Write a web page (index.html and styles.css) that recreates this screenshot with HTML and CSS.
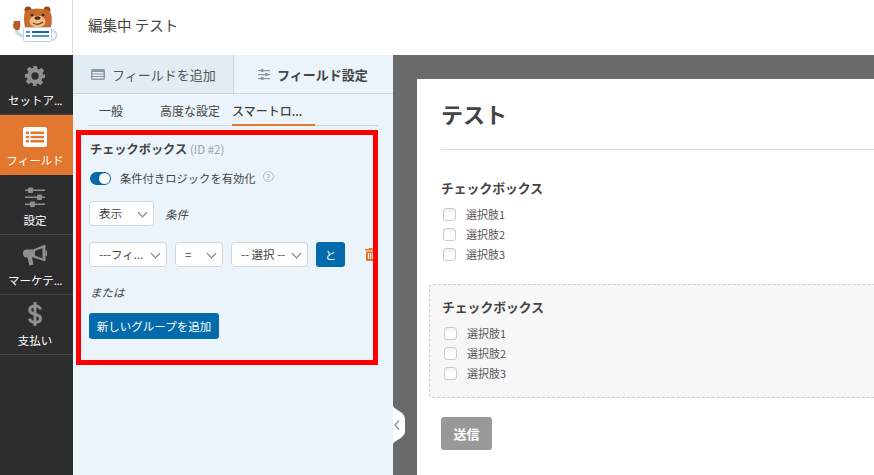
FILE: index.html
```html
<!DOCTYPE html>
<html lang="ja">
<head>
  <meta charset="UTF-8">
  <title>編集中 テスト</title>
  <link rel="stylesheet" href="styles.css">
</head>
<body>
  <header class="topbar">
    <div class="logo">
      <svg width="46" height="37" viewBox="0 0 46 37">
        <circle cx="16" cy="4" r="3.500" fill="#8f4c22"/>
        <circle cx="35" cy="4" r="3.500" fill="#8f4c22"/>
        <path d="M13 5 Q25 0 38 5 Q41 12 39 21 Q26 27 13 21 Q11 12 13 5Z" fill="#c9692c"/>
        <ellipse cx="25.500" cy="15.500" rx="8" ry="6" fill="#f2bd85"/>
        <circle cx="20" cy="9" r="1.300" fill="#33211a"/>
        <circle cx="31" cy="9" r="1.300" fill="#33211a"/>
        <ellipse cx="25.500" cy="12" rx="3" ry="1.800" fill="#4a2c1d"/>
        <path d="M21 17 Q26 20 31 16" stroke="#7a3a1a" stroke-width="1.200" fill="none"/>
        <path d="M4 24 Q5 29 12 30" stroke="#cfe0ea" stroke-width="3.500" fill="none"/>
        <path d="M2 15 L1 20 Q2 25 7 24 Q9 21 8 15 Z" fill="#b35c2a"/>
        <path d="M40 24 Q46 27 44 31 Q43 34 39 34" stroke="#cfd9e0" stroke-width="2" fill="none"/>
        <rect x="11.500" y="21.500" width="28" height="14" rx="1" fill="#fff" stroke="#c5d3dc"/>
        <rect x="14" y="25" width="4" height="2" fill="#4b92cf"/>
        <rect x="20" y="25" width="17" height="2" fill="#1c68ad"/>
        <rect x="14" y="29" width="4" height="2" fill="#4b92cf"/>
        <rect x="20" y="29" width="17" height="2" fill="#4b92cf"/>
      </svg>
    </div>
    <div class="topbar-title">編集中 テスト</div>
  </header>

  <div class="main">
    <nav class="sidebar">
      <a class="side-item">
        <svg width="22" height="22" viewBox="0 0 24 24"><path fill="#8f8f8f" d="M10 1h4l.6 3.100 2 .8 2.600-1.800 2.800 2.800-1.800 2.600.8 2L23 10v4l-3.100.6-.8 2 1.800 2.600-2.800 2.800-2.600-1.800-2 .8L14 23h-4l-.6-3.100-2-.8-2.600 1.800L2 18.100l1.800-2.600-.8-2L1 14v-4l3.100-.6.8-2L3.100 4.800 5.900 2l2.600 1.800 2-.8zM12 8a4 4 0 1 0 0 8 4 4 0 0 0 0-8z"/></svg>
        <span>セットア<b class="dots">...</b></span>
      </a>
      <a class="side-item active">
        <svg width="24" height="20" viewBox="0 0 24 20"><rect width="24" height="20" rx="2.500" fill="#fff"/><g fill="#e27730"><rect x="3" y="4.500" width="3" height="2.500"/><rect x="3" y="8.800" width="3" height="2.500"/><rect x="3" y="13" width="3" height="2.500"/><rect x="7.500" y="4.500" width="13.500" height="2.500"/><rect x="7.500" y="8.800" width="13.500" height="2.500"/><rect x="7.500" y="13" width="13.500" height="2.500"/></g></svg>
        <span>フィールド</span>
      </a>
      <a class="side-item">
        <svg width="20" height="20" viewBox="0 0 20 20"><g fill="#8f8f8f"><rect y="2.500" width="20" height="1.500"/><rect y="9.500" width="20" height="1.500"/><rect y="16.500" width="20" height="1.500"/><rect x="3" y="0.500" width="5" height="5.500" rx="1"/><rect x="12" y="7.500" width="5" height="5.500" rx="1"/><rect x="5" y="14.500" width="5" height="5.500" rx="1"/></g></svg>
        <span>設定</span>
      </a>
      <a class="side-item">
        <svg width="24" height="22" viewBox="0 0 24 22"><path fill="#8f8f8f" fill-rule="evenodd" d="M21 0h1.500v16H21L10 12.500H9l1.500 7-4 1-2-8H4a4 4 0 0 1-4-4V8a3.500 3.500 0 0 1 3.500-3.500H10zM19.500 3 12 6v4.500l7.500 3z"/><path stroke="#8f8f8f" stroke-width="1.500" d="M23.300 5.500v5.500"/></svg>
        <span>マーケテ<b class="dots">...</b></span>
      </a>
      <a class="side-item">
        <svg width="14" height="26" viewBox="0 0 14 26"><path fill="none" stroke="#8f8f8f" stroke-width="3" d="M12.500 8.500C12 6 10 5 7 5 4 5 1.700 6.500 1.700 9c0 6 10.800 2.500 10.800 8.500 0 2.500-2.500 3.800-5.500 3.800s-5-1.300-5.500-3.800"/><path stroke="#8f8f8f" stroke-width="3" d="M7 1v24"/></svg>
        <span>支払い</span>
      </a>
    </nav>

    <section class="panel">
      <div class="panel-tabs">
        <div class="panel-tab tab-add">
          <svg width="14" height="11" viewBox="0 0 14 11"><rect width="14" height="11" rx="1.500" fill="#8c9aa6"/><rect x="1.500" y="3" width="11" height="1.500" fill="#e3ecf3"/><rect x="1.500" y="5.500" width="11" height="1.500" fill="#e3ecf3"/><rect x="1.500" y="8" width="11" height="1.500" fill="#e3ecf3"/></svg>
          フィールドを追加
        </div>
        <div class="panel-tab tab-options">
          <svg width="12" height="11" viewBox="0 0 12 11"><g fill="#8c9aa6"><rect y="1" width="12" height="1.200"/><rect y="5" width="12" height="1.200"/><rect y="9" width="12" height="1.200"/><rect x="3" width="2.500" height="3"/><rect x="7" y="4" width="2.500" height="3"/><rect x="3" y="8" width="2.500" height="3"/></g></svg>
          フィールド設定
        </div>
      </div>
      <div class="sub-tabs">
        <span class="sub-tab tab-general">一般</span>
        <span class="sub-tab tab-advanced">高度な設定</span>
        <span class="sub-tab tab-smart">スマートロ...</span>
      </div>

      <div class="highlight-box">
        <h3 class="group-title">チェックボックス <small>(ID #2)</small></h3>
        <div class="toggle-row">
          <span class="toggle"></span>
          <span>条件付きロジックを有効化</span>
          <span class="help">?</span>
        </div>
        <div class="show-row">
          <div class="fake-select sel-show">表示</div>
          <em>条件</em>
        </div>
        <div class="rule-row">
          <div class="fake-select sel-field">---フィ...</div>
          <div class="fake-select sel-op">=</div>
          <div class="fake-select sel-value">-- 選択 --</div>
          <button class="btn btn-and">と</button>
          <svg class="trash" width="11" height="13" viewBox="0 0 11 13"><path fill="#e27730" d="M4 0h3l.5 1H11v1.500H0V1h3.500zM1 3.500h9V13H1zm2 1.500v6h1V5zm2 0v6h1V5zm2 0v6h1V5z"/></svg>
        </div>
        <em class="or-text">または</em>
        <button class="btn btn-group">新しいグループを追加</button>
      </div>
    </section>

    <section class="preview">
      <svg class="collapse" width="12" height="40" viewBox="0 0 12 40">
        <path fill="#fff" d="M0 0C0 5 12 6 12 14V26C12 34 0 35 0 40Z"/>
        <path d="M6 15.500 2 20l4 4.500" fill="none" stroke="#8a9099" stroke-width="1.300"/>
      </svg>
      <div class="form-card">
        <h1 class="form-title">テスト</h1>
        <div class="field">
          <div class="field-label">チェックボックス</div>
          <label class="choice"><i></i>選択肢1</label>
          <label class="choice"><i></i>選択肢2</label>
          <label class="choice"><i></i>選択肢3</label>
        </div>
        <div class="field field-active">
          <div class="field-label">チェックボックス</div>
          <label class="choice"><i></i>選択肢1</label>
          <label class="choice"><i></i>選択肢2</label>
          <label class="choice"><i></i>選択肢3</label>
        </div>
        <button class="submit">送信</button>
      </div>
    </section>
  </div>
</body>
</html>
```

FILE: styles.css
```css
* {
  box-sizing: border-box;
}
html, body {
  height: 100%;
}
body {
  margin: 0;
  overflow: hidden;
  font-family: "Noto Sans CJK JP", "Noto Sans", sans-serif;
  font-size: 12px;
  color: #444;
  background: #fff;
}
.topbar {
  display: flex;
  height: 55px;
  background: #fff;
}
.logo {
  width: 73px;
  display: flex;
  align-items: center;
  justify-content: center;
  padding: 0 2px 6px 0;
  border-right: 1px solid #ddd;
}
.topbar-title {
  padding-left: 15px;
  line-height: 49px;
  font-size: 14.500px;
  color: #444;
}
.main {
  display: flex;
  height: 420px;
}
.sidebar {
  width: 73px;
  flex: none;
  background: #2d2d2d;
}
.side-item {
  height: 60px;
  display: flex;
  flex-direction: column;
  align-items: center;
  justify-content: flex-end;
  gap: 5px;
  padding: 0 3px 6px 0;
  border-bottom: 1px solid #444;
  color: #fff;
  font-size: 11.500px;
  line-height: 16px;
  white-space: nowrap;
}
.side-item.active {
  background: #e27730;
  border-bottom-color: #e27730;
}
.dots {
  font-weight: 400;
  letter-spacing: -0.500px;
}
.panel {
  width: 320px;
  flex: none;
  background: #ebf3fb;
}
.panel-tabs {
  display: flex;
  height: 39px;
}
.panel-tab {
  display: flex;
  align-items: center;
  gap: 7px;
  font-size: 13px;
  border-bottom: 1px solid #ced7e0;
}
.tab-add {
  width: 161px;
  padding-left: 18px;
  background: #e3ecf3;
  border-right: 1px solid #ced7e0;
  color: #555;
}
.tab-options {
  flex: 1;
  padding-left: 24px;
  font-weight: 700;
}
.sub-tabs {
  display: flex;
  height: 32px;
  margin: 0 15px;
  border-bottom: 1px solid #ced7e0;
  font-size: 12px;
  line-height: 34px;
}
.sub-tab {
  height: 32px;
}
.tab-general {
  width: 72px;
  padding-left: 11px;
}
.tab-advanced {
  width: 72px;
}
.tab-smart {
  width: 83px;
  color: #444;
  font-weight: 500;
  border-bottom: 2px solid #e27730;
}
.highlight-box {
  width: 302px;
  height: 235px;
  margin: 4px 0 0 3px;
  padding: 5px 8px;
  border: 5px solid #f00;
  overflow: hidden;
}
.group-title {
  margin: 0;
  padding-left: 1px;
  font-size: 12.200px;
  line-height: 18px;
  font-weight: 700;
}
.group-title small {
  font-size: 11.500px;
  font-weight: 400;
  color: #9aa5b1;
}
.toggle-row {
  display: flex;
  align-items: center;
  margin-top: 12px;
  padding-left: 1px;
  font-size: 11.300px;
  line-height: 16px;
}
.toggle {
  position: relative;
  width: 21px;
  height: 13px;
  margin-right: 9px;
  border-radius: 7px;
  background: #036aab;
}
.toggle::after {
  content: "";
  position: absolute;
  right: 1px;
  top: 1px;
  width: 11px;
  height: 11px;
  border-radius: 50%;
  background: #fff;
}
.help {
  width: 11px;
  height: 11px;
  margin-left: 7px;
  margin-top: -4px;
  border: 1px solid #b0b8c0;
  border-radius: 50%;
  font-size: 8px;
  line-height: 9px;
  text-align: center;
  color: #a0a8b0;
}
.show-row {
  display: flex;
  align-items: center;
  gap: 11px;
  margin-top: 15px;
  font-size: 11.500px;
}
.fake-select {
  position: relative;
  flex: none;
  height: 25px;
  padding-left: 9px;
  border: 1px solid #cfd6de;
  border-radius: 4px;
  background: #fff;
  font-size: 11.500px;
  line-height: 23px;
  white-space: nowrap;
}
.fake-select::after {
  content: "";
  position: absolute;
  right: 7px;
  top: 7px;
  width: 6px;
  height: 6px;
  border-right: 1.500px solid #777;
  border-bottom: 1.500px solid #777;
  transform: rotate(45deg);
}
.sel-show {
  width: 65px;
}
.rule-row {
  display: flex;
  align-items: center;
  margin-top: 16px;
}
.sel-field {
  width: 78px;
}
.sel-op {
  width: 48px;
  margin-left: 8px;
}
.sel-value {
  width: 77px;
  margin-left: 8px;
}
.btn {
  flex: none;
  border: 0;
  border-radius: 3px;
  background: #036aab;
  color: #fff;
  font-family: inherit;
  font-size: 11.500px;
}
.btn-and {
  width: 29px;
  height: 25px;
  margin-left: 8px;
  padding: 0;
}
.trash {
  flex: none;
  margin-left: 20px;
}
.or-text {
  display: block;
  margin-top: 17px;
  padding-left: 1px;
  font-size: 11.500px;
  line-height: 16px;
}
.btn-group {
  display: block;
  width: 130px;
  height: 26px;
  margin-top: 13px;
  padding: 0;
}
.preview {
  position: relative;
  flex: 1;
  padding: 24px 0 0 24px;
  background: #6a6a6a;
}
.collapse {
  position: absolute;
  left: 0;
  top: 350px;
  z-index: 2;
}
.form-card {
  height: 396px;
  padding: 15px 0 0 24px;
  background: #fff;
}
.form-title {
  margin: 0;
  padding-bottom: 17px;
  border-bottom: 1px solid #ddd;
  font-size: 22px;
  line-height: 38px;
  font-weight: 700;
}
.field {
  margin-top: 29px;
}
.field-label {
  font-size: 12.800px;
  font-weight: 700;
  line-height: 18px;
  margin-bottom: 7px;
}
.choice {
  display: flex;
  align-items: center;
  height: 20px;
  font-size: 11px;
  color: #555;
}
.choice i {
  width: 13px;
  height: 13px;
  margin: 0 10px 0 2px;
  border: 1px solid #ccc;
  border-radius: 3px;
  background: linear-gradient(#eef0ee, #fff 50%);
}
.field-active {
  margin: 20px 0 0 -12px;
  padding: 13px 12px 0;
  height: 114px;
  border: 1px dashed #ccc;
  border-right: 0;
  border-radius: 4px 0 0 4px;
  background: #f7f7f7;
}
.submit {
  display: block;
  width: 51px;
  height: 33px;
  margin-top: 19px;
  padding: 0;
  border: 0;
  border-radius: 3px;
  background: #999;
  color: #fff;
  font-family: inherit;
  font-size: 13px;
  font-weight: 700;
}
```
